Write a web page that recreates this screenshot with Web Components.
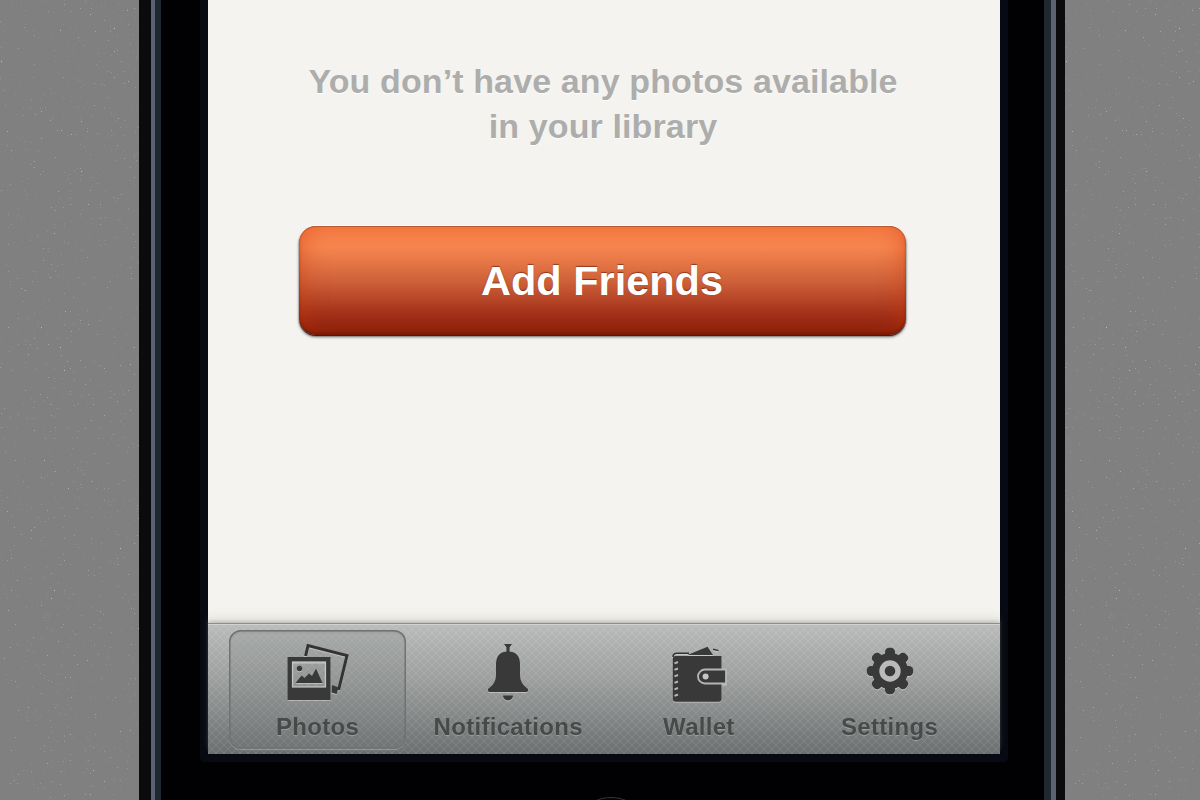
<!DOCTYPE html>
<html>
<head>
<meta charset="utf-8">
<title>Photos</title>
<style>
  html, body { margin: 0; height: 800px; overflow: hidden; background: #808080; }
  body { font-family: "Liberation Sans", Arial, sans-serif; }
</style>
</head>
<body>
<x-stage>
  <x-phone>
    <x-empty-message>You don’t have any photos available<br>in your library</x-empty-message>
    <x-action-button>Add Friends</x-action-button>
    <x-tab-bar slot="tabs">
      <x-tab icon="photos" selected>Photos</x-tab>
      <x-tab icon="bell">Notifications</x-tab>
      <x-tab icon="wallet">Wallet</x-tab>
      <x-tab icon="gear">Settings</x-tab>
    </x-tab-bar>
  </x-phone>
</x-stage>

<script>
// Icon data: drawn 1:1 in a 64x64 box
const gearTeeth = [0, 45, 90, 135, 180, 225, 270, 315]
  .map(a => `<rect x="27" y="7.8" width="10" height="12" rx="4.2" transform="rotate(${a} 32 31)"/>`)
  .join('');

const stitches = [22, 28.5, 35, 41.5, 48, 54.5]
  .map(y => `<path d="M7.5 ${y + 1.4} L11 ${y}" stroke="#b4b6b5" stroke-width="2"/>`)
  .join('');

const icons = {
  photos: `
    <path d="M19.6 16 L22 5.6 L61 15.6 L52.6 50" fill="none" stroke="#333" stroke-width="3"/>
    <path d="M46 45 L52.6 47.5 L50.6 54 L45.6 52.5Z"/>
    <path fill-rule="evenodd" d="M1.5 17 H44.5 V60 H1.5Z M6.5 22 V47 H39.5 V22Z"/>
    <rect x="6.5" y="22" width="33" height="25" fill="none" stroke="#c3c5c4" stroke-width="1.2"/>
    <circle cx="13.5" cy="28.5" r="2.7"/>
    <path d="M9.5 43 L15.5 35.5 L18.5 38 L23 33.5 L26 36 L30 28.5 L36.5 43Z"/>`,
  bell: `
    <path d="M28 4 H36 L33.6 7.5 V12 H30.4 V7.5Z"/>
    <path d="M32 11.5 C40 11.5 44 16 44 24 L44 35 C44 42 48 46 51.5 48.5 C52.8 49.6 52 52 50 52 L14 52 C12 52 11.2 49.6 12.5 48.5 C16 46 20 42 20 35 L20 24 C20 16 24 11.5 32 11.5Z"/>
    <path d="M27 55.5 H37 A5 5 0 0 1 27 55.5Z"/>`,
  wallet: `
    <path d="M6 17 Q6 13.2 10 13.2 L22 13.2" fill="none" stroke="#333" stroke-width="1.6"/>
    <path d="M20.5 15 L40.5 6.7 L46 15Z"/>
    <path d="M46 9.2 L51.5 10.6" stroke="#333" stroke-width="1.4"/>
    <path d="M9 16 H54.5 V58.5 Q54.5 61.7 51.5 61.7 H9 Q5.8 61.7 5.8 58.5 V19 Q5.8 16 9 16Z"/>
    ${stitches}
    <path d="M59 29.5 H38 A7 7 0 0 0 38 43.5 H59Z" stroke="#b4b6b5" stroke-width="1.8"/>
    <circle cx="38.6" cy="36.5" r="3" fill="#c3c5c4"/>`,
  gear: `
    ${gearTeeth}
    <circle cx="32" cy="31" r="18"/>
    <circle cx="32" cy="31" r="8" fill="none" stroke="#b9bbba" stroke-width="5.4"/>`
};

// Page backdrop: flat grey with sparse light specks, phone in the middle
class XStage extends HTMLElement {
  constructor() {
    super();
    const grain = `<svg><rect width="100%" height="100%" fill="#808080"/><rect width="100%" height="100%" filter="url(#grain)"/></svg>`;
    this.attachShadow({ mode: 'open' }).innerHTML = `
      <style>
        :host { display: flex; width: 1200px; height: 800px; overflow: hidden; }
        .side { position: relative; flex: 1; overflow: hidden; background: #808080; }
        .side.left { flex: 0 0 139px; }
        svg { display: block; width: 100%; height: 100%; }
      </style>
      <svg width="0" height="0" style="position:absolute">
        <filter id="grain" x="0" y="0" width="100%" height="100%">
          <feTurbulence type="fractalNoise" baseFrequency="0.7" numOctaves="2" seed="11"/>
          <feColorMatrix values="0 0 0 0 .62  0 0 0 0 .62  0 0 0 0 .62  5 0 0 0 -3.75"/>
        </filter>
      </svg>
      <div class="side left">${grain}</div>
      <slot></slot>
      <div class="side">${grain}</div>`;
  }
}

// Phone body: stripes of the metal edge, then the black glass and the screen
class XPhone extends HTMLElement {
  constructor() {
    super();
    this.attachShadow({ mode: 'open' }).innerHTML = `
      <style>
        :host {
          display: block; flex: 0 0 926px; height: 800px; box-sizing: border-box;
          border-left: 12px solid #0b0b0d; border-right: 9px solid #0b0b0d;
        }
        .metal { height: 100%; box-sizing: border-box; border-left: 4px solid #5b6272; border-right: 5px solid #5b6272; }
        .rim { height: 100%; box-sizing: border-box; border-left: 6px solid #1f282e; border-right: 7px solid #1f282e; }
        .glass { position: relative; height: 100%; box-sizing: border-box; background: #010103; padding: 0 36px 0 39px; overflow: hidden; }
        .edge { height: 754px; border: 8px solid #070a12; border-top: 0; border-radius: 0 0 5px 5px; }
        .screen { display: flex; flex-direction: column; align-items: center; height: 754px; background: #f4f3ef; }
        .tabs { margin-top: auto; align-self: stretch; }
        .home {
          position: absolute; left: 410px; top: 797px; width: 80px; height: 80px;
          border-radius: 50%; border-top: 1px solid #3a3a3c; box-sizing: border-box;
        }
      </style>
      <div class="metal"><div class="rim"><div class="glass">
        <div class="edge"><div class="screen">
          <slot></slot>
          <div class="tabs"><slot name="tabs"></slot></div>
        </div></div>
        <div class="home"></div>
      </div></div></div>`;
  }
}

class XEmptyMessage extends HTMLElement {
  constructor() {
    super();
    this.attachShadow({ mode: 'open' }).innerHTML = `
      <style>
        :host {
          display: block; margin: 59px 2px 0 0; text-align: center; white-space: nowrap;
          font: bold 34px/45px "Liberation Sans", Arial, sans-serif; letter-spacing: .12px; color: #adadac;
          text-shadow: 0 1px 0 #fff;
        }
      </style>
      <slot></slot>`;
  }
}

class XActionButton extends HTMLElement {
  constructor() {
    super();
    this.attachShadow({ mode: 'open' }).innerHTML = `
      <style>
        :host {
          display: flex; align-items: center; justify-content: center;
          width: 607px; height: 109px; margin: 77px 4px 0 0; padding-top: 1px; box-sizing: border-box;
          border-radius: 17px; color: #fff;
          font: bold 41.5px "Liberation Sans", Arial, sans-serif;
          text-shadow: 0 -1px 1px rgba(90,20,0,.6);
          background: linear-gradient(#ff8c52 0%, #f78650 20%, #cc5f38 52%, #a4321a 80%, #7a1a0a 100%);
          box-shadow: 0 -1px 0 #fff, 0 1px 1px #1e1e1e, 0 2px 3px rgba(0,0,0,.55),
            inset 0 1px 0 #b8582f, inset 0 -2px 3px rgba(90,15,0,.5), inset 0 0 26px rgba(204,52,8,.55);
        }
      </style>
      <slot></slot>`;
  }
}

class XTabBar extends HTMLElement {
  constructor() {
    super();
    this.attachShadow({ mode: 'open' }).innerHTML = `
      <style>
        :host {
          position: relative; display: grid; grid-template-columns: repeat(4, 177px); column-gap: 13.7px;
          height: 130px; box-sizing: border-box; padding: 5px 0 0 21px;
          border-top: 1px solid #d2d3d1;
          background:
            linear-gradient(45deg, transparent 45%, rgba(255,255,255,.1) 45% 55%, transparent 55%) 0 0 / 8px 8px,
            linear-gradient(-45deg, transparent 45%, rgba(255,255,255,.1) 45% 55%, transparent 55%) 0 0 / 8px 8px,
            linear-gradient(#b9bbba, #9a9d9c 45%, #6b6f6f);
          box-shadow: 0 -1px 0 #8d8d8b, 0 -3px 3px rgba(120,120,115,.35), 0 -8px 8px rgba(150,150,145,.14);
        }
      </style>
      <slot></slot>`;
  }
}

class XTab extends HTMLElement {
  connectedCallback() {
    if (this.shadowRoot) return;
    const icon = icons[this.getAttribute('icon')] || '';
    this.attachShadow({ mode: 'open' }).innerHTML = `
      <style>
        :host {
          display: flex; flex-direction: column; align-items: center;
          height: 119px; box-sizing: border-box; padding-top: 10px; border-radius: 12px;
          color: #484949; font: bold 24px/28px "Liberation Sans", Arial, sans-serif; letter-spacing: .3px;
          white-space: nowrap; text-shadow: 0 1px 0 rgba(255,255,255,.22);
        }
        :host([selected]) {
          background: rgba(120,124,124,.22);
          box-shadow: inset 0 0 0 1.5px #6f7372, 0 1px 0 rgba(255,255,255,.25), inset 0 2px 3px rgba(60,60,60,.2);
        }
        svg { display: block; width: 64px; height: 64px; fill: #393939; filter: drop-shadow(0 1px 0 rgba(255,255,255,.35)) blur(.4px); }
        .label { margin-top: 9px; filter: blur(.3px); }
      </style>
      <svg viewBox="0 0 64 64">${icon}</svg>
      <div class="label"><slot></slot></div>`;
  }
}

customElements.define('x-stage', XStage);
customElements.define('x-phone', XPhone);
customElements.define('x-empty-message', XEmptyMessage);
customElements.define('x-action-button', XActionButton);
customElements.define('x-tab-bar', XTabBar);
customElements.define('x-tab', XTab);
</script>
</body>
</html>
